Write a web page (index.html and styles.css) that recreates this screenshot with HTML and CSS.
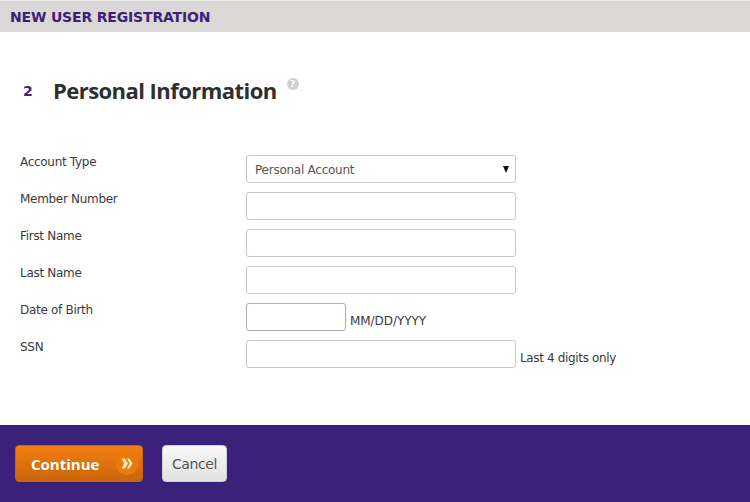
FILE: index.html
```html
<!DOCTYPE html>
<html lang="en">
<head>
    <meta charset="UTF-8">
    <meta name="viewport" content="width=device-width, initial-scale=1.0">
    <title>New User Registration</title>
    <link rel="stylesheet" href="styles.css">
</head>
<body>
    <div class="page-header">NEW USER REGISTRATION</div>

    <div class="step-title">
        <span class="step-number">2</span>
        <h1>Personal Information</h1>
        <span class="help-icon">?</span>
    </div>

    <form class="reg-form">
        <div class="form-row">
            <label for="accountType">Account Type</label>
            <div class="select-wrap">
                <select id="accountType">
                    <option>Personal Account</option>
                </select>
                <span class="select-arrow"></span>
            </div>
        </div>
        <div class="form-row">
            <label for="memberNumber">Member Number</label>
            <input type="text" id="memberNumber">
        </div>
        <div class="form-row">
            <label for="firstName">First Name</label>
            <input type="text" id="firstName">
        </div>
        <div class="form-row">
            <label for="lastName">Last Name</label>
            <input type="text" id="lastName">
        </div>
        <div class="form-row">
            <label for="dob">Date of Birth</label>
            <input type="text" id="dob" class="short">
            <span class="hint hint-date">MM/DD/YYYY</span>
        </div>
        <div class="form-row">
            <label for="ssn">SSN</label>
            <input type="text" id="ssn">
            <span class="hint">Last 4 digits only</span>
        </div>
    </form>

    <div class="page-footer">
        <button type="button" class="btn-continue">
            Continue
            <span class="btn-arrows">
                <svg width="12" height="11" viewBox="0 0 12 11">
                    <path d="M0.5 0.5 L4 0.5 L7 5.5 L4 10.5 L0.5 10.5 L3.2 5.5 Z M6 0.5 L8.5 0.5 L11.5 5.5 L8.5 10.5 L6 10.5 L8.6 5.5 Z" fill="#ffe9a8"/>
                </svg>
            </span>
        </button>
        <button type="button" class="btn-cancel">Cancel</button>
    </div>
</body>
</html>
```

FILE: styles.css
```css
body {
    font-family: 'DejaVu Sans', sans-serif;
    font-size: 12px;
    margin: 0;
    padding: 0;
    color: #3a3a3a;
    background: white;
}

.page-header {
    height: 31px;
    line-height: 33px;
    padding-left: 10px;
    background: #d9d8d6;
    border-top: 1px solid #e8e8e6;
    color: #3b2179;
    font-size: 14px;
    font-weight: bold;
    letter-spacing: -0.17px;
}

.step-title {
    display: flex;
    align-items: flex-start;
    height: 123px;
    padding-left: 23px;
}

.step-number {
    width: 30px;
    margin-top: 51px;
    color: #3b2179;
    font-size: 14px;
    font-weight: bold;
}

h1 {
    margin: 43px 0 0 0;
    color: #2f2f2f;
    font-family: 'Open Sans', sans-serif;
    font-size: 22px;
    line-height: 30px;
    letter-spacing: -0.55px;
}

.help-icon {
    width: 12px;
    height: 12px;
    margin: 46px 0 0 10px;
    border-radius: 50%;
    background: #cfcfcf;
    color: white;
    font-size: 9px;
    font-weight: bold;
    line-height: 12px;
    text-align: center;
}

.reg-form {
    height: 270px;
    padding-left: 20px;
}

.form-row {
    display: flex;
    align-items: flex-end;
    height: 28px;
    margin-bottom: 9px;
}

.form-row label {
    align-self: flex-start;
    width: 226px;
    letter-spacing: -0.3px;
}

.form-row input,
.form-row select {
    box-sizing: border-box;
    width: 270px;
    height: 28px;
    padding: 0 8px;
    border: 1px solid #c8c8c8;
    border-radius: 3px;
    background: white;
    color: #555;
    font-family: 'DejaVu Sans', sans-serif;
    font-size: 12px;
    letter-spacing: -0.25px;
}

.form-row select {
    appearance: none;
    display: block;
    padding-top: 2px;
}

.form-row input.short {
    width: 100px;
    border-color: #b0b0b0;
}

.select-wrap {
    position: relative;
}

.select-arrow {
    position: absolute;
    top: 11px;
    right: 7px;
    border-left: 3.5px solid transparent;
    border-right: 3.5px solid transparent;
    border-top: 7px solid #111;
}

.hint {
    margin: 0 0 3px 4px;
    letter-spacing: -0.35px;
}

.hint-date {
    letter-spacing: -0.05px;
}

.page-footer {
    display: flex;
    align-items: flex-start;
    gap: 19px;
    height: 57px;
    padding: 20px 0 0 15px;
    background: #3b2179;
}

.btn-continue {
    display: flex;
    align-items: center;
    justify-content: space-between;
    box-sizing: border-box;
    width: 128px;
    height: 37px;
    padding: 0 4px 0 15px;
    border: 1px solid #c9660c;
    border-radius: 4px;
    background: linear-gradient(#f47f12, #c9650a);
    color: white;
    font-family: 'Open Sans', sans-serif;
    font-size: 15px;
    font-weight: bold;
    cursor: pointer;
}

.btn-arrows {
    display: flex;
    align-items: center;
    justify-content: center;
    width: 22px;
    height: 22px;
    border-radius: 50%;
    background: #ea7a10;
}

.btn-cancel {
    box-sizing: border-box;
    width: 65px;
    height: 37px;
    border: 1px solid #d0d0d0;
    border-radius: 4px;
    background: linear-gradient(#f8f8f8, #e2e2e2);
    color: #555;
    font-family: 'DejaVu Sans', sans-serif;
    font-size: 14px;
    letter-spacing: -0.4px;
    cursor: pointer;
}
```
